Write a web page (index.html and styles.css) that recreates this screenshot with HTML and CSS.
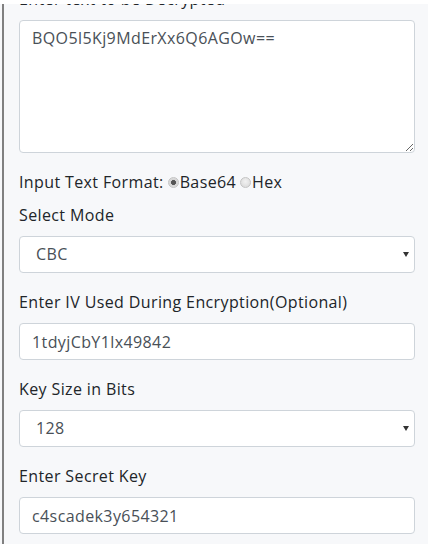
FILE: index.html
```html
<!DOCTYPE html>
<html>
<head>
<meta charset="utf-8">
<link rel="stylesheet" href="styles.css">
</head>
<body>
<div class="topbar"></div>
<div class="panel">
  <div class="group first">
    <label class="lbl">Enter text to be Decrypted</label>
    <textarea class="ctl area">BQO5l5Kj9MdErXx6Q6AGOw==</textarea>
  </div>
  <div class="fmt">
    <span class="fmt-lbl">Input Text Format:</span>
    <input type="radio" name="fmt" class="radio" checked><span class="opt">Base64</span>
    <input type="radio" name="fmt" class="radio"><span class="opt">Hex</span>
  </div>
  <div class="group">
    <label class="lbl">Select Mode</label>
    <div class="selwrap"><select class="ctl sel"><option>CBC</option><option>ECB</option></select></div>
  </div>
  <div class="group">
    <label class="lbl">Enter IV Used During Encryption(Optional)</label>
    <input class="ctl" type="text" value="1tdyjCbY1lx49842">
  </div>
  <div class="group">
    <label class="lbl">Key Size in Bits</label>
    <div class="selwrap"><select class="ctl sel"><option>128</option><option>192</option><option>256</option></select></div>
  </div>
  <div class="group">
    <label class="lbl">Enter Secret Key</label>
    <input class="ctl" type="text" value="c4scadek3y654321">
  </div>
</div>
</body>
</html>
```
FILE: styles.css
```css
* { box-sizing: border-box; }
html, body { margin: 0; padding: 0; }
body {
  background: #f7f8fa;
  font-family: "Open Sans", "Liberation Sans", sans-serif;
  font-size: 16px;
  letter-spacing: 0.38px;
  color: #212529;
  overflow: hidden;
}
.topbar {
  height: 4px;
  background: #ffffff;
  position: relative;
  z-index: 2;
}
.panel {
  margin-left: 2px;
  border-left: 2px solid #808080;
  padding: 0 13px 40px 15px;
  min-height: 600px;
}
.group { margin-bottom: 17px; }
.group.first { margin-top: -17px; }
.lbl {
  display: block;
  line-height: 24px;
  margin-bottom: 9px;
}
.ctl {
  display: block;
  width: 100%;
  height: 37px;
  padding: 6px 12px;
  font-family: "Open Sans", "Liberation Sans", sans-serif;
  font-size: 16px;
  letter-spacing: 0.4px;
  line-height: 23px;
  color: #495057;
  background: #ffffff;
  border: 1px solid #ced4da;
  border-radius: 4px;
  outline: none;
}
.area {
  height: 133px;
  resize: vertical;
}
.selwrap { position: relative; }
.selwrap::after {
  content: "";
  position: absolute;
  right: 6px;
  top: 16px;
  border-left: 3.5px solid transparent;
  border-right: 3.5px solid transparent;
  border-top: 5px solid #333;
}
.sel {
  appearance: none;
  -webkit-appearance: none;
  padding: 6px 24px 6px 16px;
}
.fmt {
  display: flex;
  align-items: center;
  line-height: 24px;
  margin-bottom: 9px;
}
.fmt-lbl { margin-right: 4px; }
.radio {
  appearance: none;
  -webkit-appearance: none;
  width: 11px;
  height: 11px;
  margin: 0 1px 0 0;
  border-radius: 50%;
  border: 1px solid #c4c4c4;
  background: radial-gradient(circle at 50% 40%, #f2f2f2, #d6d6d6);
}
.radio:checked {
  background: radial-gradient(circle, #555 0, #555 2.2px, #d4d4d4 2.8px, #e4e4e4 100%);
}
.opt { margin-right: 4px; }
```
